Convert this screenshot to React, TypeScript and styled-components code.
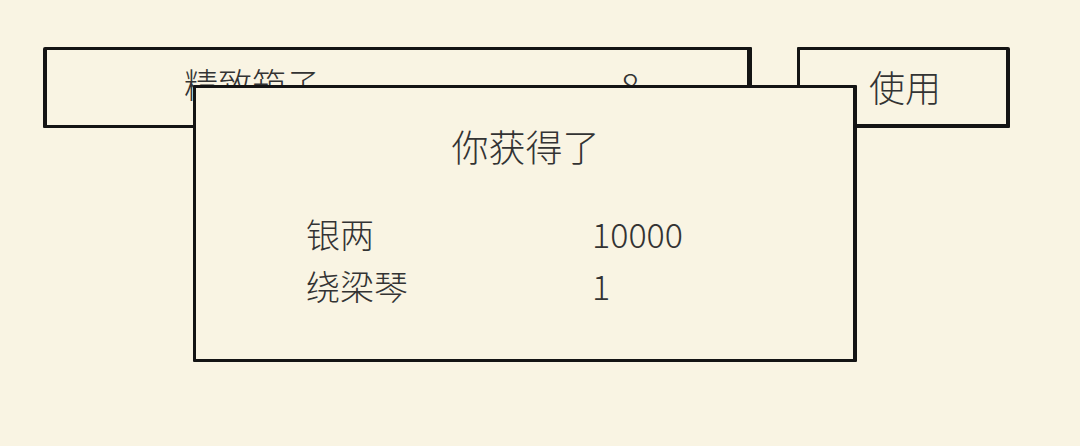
import React from 'react';
import styled, {createGlobalStyle} from 'styled-components';

const ink = '#141414';
const paper = '#f9f4e3';
const textColor = '#333333';

const GlobalStyle = createGlobalStyle`
	html, body {
		margin: 0;
		padding: 0;
		background: ${paper};
	}
	body {
		font-family: "Noto Sans CJK SC", "Noto Sans", sans-serif;
		color: ${textColor};
	}
`;

const Page = styled.div`
	position: relative;
	width: 1080px;
	height: 446px;
	overflow: hidden;
	background: ${paper};
`;

const Row = styled.div`
	display: flex;
	gap: 45px;
	padding: 47px 0 0 43px;
`;

const ItemBox = styled.div`
	box-sizing: border-box;
	width: 709px;
	height: 81px;
	border-style: solid;
	border-color: ${ink};
	border-width: 3px 5px 3px 4px;
	border-radius: 2px 1px 2px 1px;
	display: grid;
	grid-template-columns: 437px 1fr;
	align-items: center;
	padding: 0 0 8px 137px;
	font-size: 34px;
	font-weight: 300;
`;

const UseButton = styled.button`
	box-sizing: border-box;
	width: 213px;
	height: 81px;
	background: transparent;
	border-style: solid;
	border-color: ${ink};
	border-width: 3px 4px 4px 3px;
	border-radius: 1px 2px 1px 2px;
	font-family: inherit;
	font-size: 36px;
	font-weight: 300;
	color: ${textColor};
	padding: 0 0 2px 4px;
	text-align: center;
	cursor: pointer;
`;

const Modal = styled.div`
	position: absolute;
	left: 193px;
	top: 85px;
	box-sizing: border-box;
	width: 664px;
	height: 277px;
	background: ${paper};
	border-style: solid;
	border-color: ${ink};
	border-width: 3px 4px 3px 3px;
	border-radius: 1px;
	padding-top: 33px;
`;

const Title = styled.div`
	text-align: center;
	font-size: 37px;
	font-weight: 300;
	line-height: 50px;
	padding-left: 2px;
`;

const RewardList = styled.div`
	display: grid;
	grid-template-columns: 286px 1fr;
	grid-auto-rows: 52px;
	align-items: center;
	margin-top: 37px;
	padding-left: 110px;
	font-size: 34px;
	font-weight: 300;
`;

const Cell = styled.span`
	line-height: 52px;
`;

const rewards = [
	{name: '银两', count: 10000},
	{name: '绕梁琴', count: 1},
];

export default function App() {
	return (
		<Page>
			<GlobalStyle/>
			<Row>
				<ItemBox>
					<span>精致箱子</span>
					<span>8</span>
				</ItemBox>
				<UseButton>使用</UseButton>
			</Row>
			<Modal>
				<Title>你获得了</Title>
				<RewardList>
					{rewards.map(r => (
						<React.Fragment key={r.name}>
							<Cell>{r.name}</Cell>
							<Cell>{r.count}</Cell>
						</React.Fragment>
					))}
				</RewardList>
			</Modal>
		</Page>
	);
}
